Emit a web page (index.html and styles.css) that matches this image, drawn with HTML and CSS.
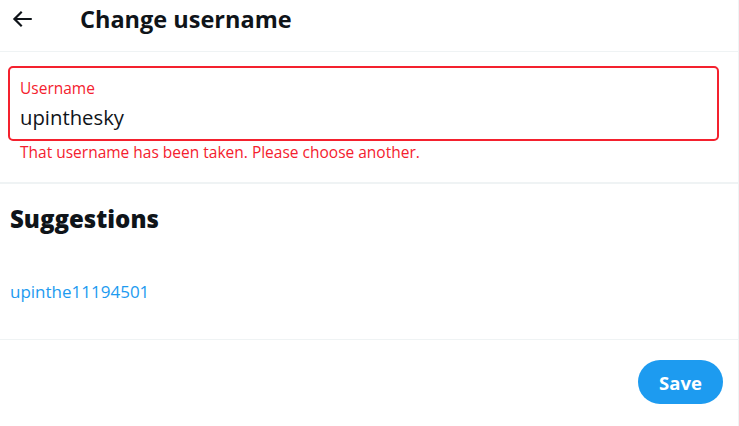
FILE: index.html
```html
<!DOCTYPE html>
<html>
<head>
<meta charset="utf-8">
<link rel="stylesheet" href="styles.css">
</head>
<body>
<div class="page">
  <header class="header">
    <button class="back" aria-label="Back">
      <svg viewBox="0 0 24 24" width="26" height="26"><path d="M7.414 13l5.043 5.04-1.414 1.42L3.586 12l7.457-7.46 1.414 1.42L7.414 11H21v2H7.414z" fill="#0f1419"/></svg>
    </button>
    <h1 class="title">Change username</h1>
  </header>
  <section class="field-section">
    <label class="field">
      <span class="field-label">Username</span>
      <span class="field-value">upinthesky</span>
    </label>
    <div class="error">That username has been taken. Please choose another.</div>
  </section>
  <section class="suggestions">
    <h2 class="sugg-title">Suggestions</h2>
    <a class="sugg-link" href="#">upinthe11194501</a>
  </section>
  <footer class="actions">
    <button class="save">Save</button>
  </footer>
</div>
</body>
</html>
```
FILE: styles.css
```css
* { box-sizing: border-box; }
html, body { margin: 0; padding: 0; background: #fff; }
body {
  font-family: "Open Sans", "Noto Sans", "Liberation Sans", sans-serif;
  color: #0f1419;
}
.page {
  width: 739px;
  height: 426px;
  border-right: 1px solid #eff3f4;
}
.header {
  height: 52px;
  display: flex;
  align-items: flex-start;
  border-bottom: 1px solid #eff3f4;
  padding: 6px 0 0 9px;
}
.back {
  width: 26px;
  height: 26px;
  border: 0;
  padding: 0;
  background: none;
  display: flex;
  align-items: center;
  justify-content: center;
  margin-right: 45px;
}
.title {
  margin: 1px 0 0;
  font-size: 23.5px;
  font-weight: 700;
  line-height: 24px;
}
.field-section {
  padding: 14px 19px 21px 8px;
  border-bottom: 2px solid #eff3f4;
}
.field {
  display: flex;
  flex-direction: column;
  height: 75px;
  border: 2px solid #f4212e;
  border-radius: 5px;
  padding: 11px 10px 0;
}
.field-label {
  font-size: 15.5px;
  line-height: 18px;
  color: #f4212e;
}
.field-value {
  margin-top: 8px;
  font-size: 20.3px;
  line-height: 24px;
  color: #0f1419;
}
.error {
  margin-top: 2px;
  padding-left: 12px;
  font-size: 15.5px;
  line-height: 18px;
  color: #f4212e;
}
.suggestions {
  padding: 20px 10px 36px;
  border-bottom: 1px solid #eff3f4;
}
.sugg-title {
  margin: 0;
  font-size: 24px;
  font-weight: 800;
  line-height: 30px;
}
.sugg-link {
  display: block;
  margin-top: 47px;
  font-size: 17px;
  line-height: 22px;
  color: #1d9bf0;
  text-decoration: none;
}
.actions {
  display: flex;
  justify-content: flex-end;
  padding: 20px 15px 0;
}
.save {
  width: 85px;
  height: 44px;
  border: 0;
  border-radius: 22px;
  background: #1d9bf0;
  color: #fff;
  font-family: inherit;
  font-size: 18.5px;
  font-weight: 700;
}
```
